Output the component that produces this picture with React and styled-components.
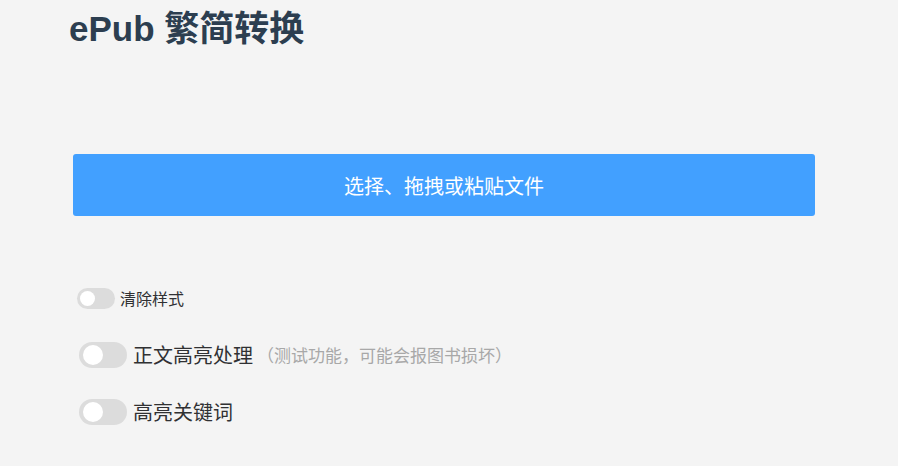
import React, { useState } from 'react';
import styled, { createGlobalStyle } from 'styled-components';

const GlobalStyle = createGlobalStyle`
  body {
    margin: 0;
    background: #f4f4f4;
    font-family: "Liberation Sans", "Noto Sans CJK SC", sans-serif;
  }
`

const Page = styled.div`
  padding: 0 83px 0 73px;
  display: flex;
  flex-direction: column;
`

const Title = styled.h1`
  margin: 8px 0 0 -4px;
  font-size: 35px;
  line-height: 42px;
  font-weight: bold;
  color: #2c3e50;
`

const UploadButton = styled.button`
  margin-top: 104px;
  height: 62px;
  width: 100%;
  border: none;
  border-radius: 3px;
  background: #42a0ff;
  color: #fff;
  font-family: "Noto Sans CJK SC", sans-serif;
  font-size: 20px;
  cursor: pointer;
`

const Options = styled.div`
  margin-top: 71px;
  display: flex;
  flex-direction: column;
  gap: 31px;
`

const Row = styled.label`
  display: flex;
  align-items: center;
  height: ${p => (p.small ? 22 : 26)}px;
  gap: ${p => (p.small ? 5 : 6)}px;
  margin-left: ${p => (p.small ? 4 : 6)}px;
  margin-bottom: ${p => (p.small ? 2 : 0)}px;
  cursor: pointer;
`

const Track = styled.span`
  position: relative;
  flex: none;
  width: ${p => (p.small ? 38 : 48)}px;
  height: ${p => (p.small ? 21 : 26)}px;
  border-radius: 20px;
  background: ${p => (p.on ? '#42a0ff' : '#dcdcdc')};
  transition: background 0.2s;
`

const Knob = styled.span`
  position: absolute;
  top: 3px;
  left: ${p => (p.on ? (p.small ? 20 : 25) : (p.small ? 3 : 4))}px;
  width: ${p => (p.small ? 15 : 20)}px;
  height: ${p => (p.small ? 15 : 20)}px;
  border-radius: 50%;
  background: #fff;
  transition: left 0.2s;
`

const Label = styled.span`
  font-family: "Noto Sans CJK SC", sans-serif;
  font-size: ${p => (p.small ? 16 : 20)}px;
  line-height: ${p => (p.small ? 22 : 26)}px;
  color: #303133;
`

const Note = styled.span`
  font-family: "Noto Sans CJK SC", sans-serif;
  font-size: 17px;
  line-height: 26px;
  color: #a8a8a8;
  margin-left: -2px;
`

function Toggle({ small, label, note }) {
  const [on, setOn] = useState(false);
  return (
    <Row small={small} onClick={() => setOn(!on)}>
      <Track small={small} on={on}>
        <Knob small={small} on={on} />
      </Track>
      <Label small={small}>{label}</Label>
      {note && <Note>{note}</Note>}
    </Row>
  )
}

export default function App() {
  return (
    <>
      <GlobalStyle />
      <Page>
        <Title>ePub 繁简转换</Title>
        <UploadButton>选择、拖拽或粘贴文件</UploadButton>
        <Options>
          <Toggle small label="清除样式" />
          <Toggle label="正文高亮处理" note="（测试功能，可能会报图书损坏）" />
          <Toggle label="高亮关键词" />
        </Options>
      </Page>
    </>
  )
}
